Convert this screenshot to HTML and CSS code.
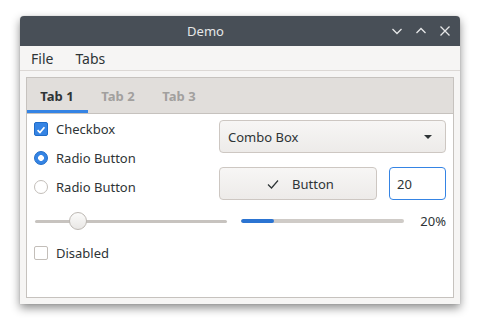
FILE: index.html
```html
<!DOCTYPE html>
<html lang="en">
<head>
  <meta charset="UTF-8" />
  <title>Demo</title>
  <link rel="stylesheet" href="styles.css">
</head>
<body>

  <div class="window">
    <header class="titlebar">
      <span class="title">Demo</span>
      <div class="controls">
        <svg width="12" height="12" viewBox="0 0 12 12"><path d="M1.5 4 L6 8.5 L10.5 4" /></svg>
        <svg width="12" height="12" viewBox="0 0 12 12"><path d="M1.5 8 L6 3.5 L10.5 8" /></svg>
        <svg width="12" height="12" viewBox="0 0 12 12"><path d="M1.5 1.5 L10.5 10.5 M10.5 1.5 L1.5 10.5" /></svg>
      </div>
    </header>

    <nav class="menubar">
      <span>File</span>
      <span>Tabs</span>
    </nav>

    <div class="client">
      <div class="tabs">
        <div class="tab-bar">
          <span class="tab active">Tab 1</span>
          <span class="tab">Tab 2</span>
          <span class="tab">Tab 3</span>
        </div>

        <div class="page">
          <div class="top">
            <div class="left">
              <label class="row"><span class="check on"><svg width="14" height="14" viewBox="0 0 14 14"><path d="M3 7.2 L5.8 10 L11 3.8" /></svg></span>Checkbox</label>
              <label class="row"><span class="radio on"></span>Radio Button</label>
              <label class="row"><span class="radio"></span>Radio Button</label>
            </div>
            <div class="right">
              <div class="combo">
                <span>Combo Box</span>
                <span class="arrow"></span>
              </div>
              <div class="buttons">
                <button class="btn">
                  <svg width="14" height="14" viewBox="0 0 14 14"><path d="M2 7.5 L5.5 11 L12 3.5" /></svg>
                  Button
                </button>
                <div class="spin">20</div>
              </div>
            </div>
          </div>

          <div class="sliders">
            <div class="slider">
              <div class="track"></div>
              <div class="handle"></div>
            </div>
            <div class="progress">
              <div class="fill" style="width: 20%"></div>
            </div>
            <span class="percent">20%</span>
          </div>

          <label class="row disabled"><span class="check"></span>Disabled</label>
        </div>
      </div>
    </div>
  </div>

</body>
</html>
```

FILE: styles.css
```css
body {
  margin: 0;
  padding: 16px 20px;
  background: #ffffff;
  font-family: 'Noto Sans', sans-serif;
  font-size: 13px;
  color: #2e3436;
}

.window {
  width: 440px;
  height: 288px;
  display: flex;
  flex-direction: column;
  background: #f6f5f4;
  border-radius: 4px 4px 0 0;
  box-shadow: 0 4px 10px rgba(0,0,0,0.45), 0 0 1px rgba(0,0,0,0.3);
  overflow: hidden;
}

.titlebar {
  height: 30px;
  background: #484f57;
  color: #e6e7e8;
  display: flex;
  align-items: center;
}

.title {
  flex: 1;
  text-align: center;
  font-size: 13px;
}

.controls {
  display: flex;
  gap: 12px;
  padding-right: 9px;
  padding-bottom: 1px;
}

.controls path {
  fill: none;
  stroke: #e6e7e8;
  stroke-width: 1.3;
}

.menubar {
  height: 24px;
  display: flex;
  align-items: center;
  gap: 22px;
  padding-left: 11px;
  font-size: 14px;
  border-bottom: 1px solid #dcd8d5;
}

.client {
  flex: 1;
  padding: 6px;
  display: flex;
}

.tabs {
  flex: 1;
  border: 1px solid #c6c2be;
  background: #ffffff;
  display: flex;
  flex-direction: column;
}

.tab-bar {
  height: 35px;
  background: #e1dedb;
  border-bottom: 1px solid #c6c2be;
  display: flex;
}

.tab {
  width: 61px;
  display: flex;
  align-items: center;
  justify-content: center;
  font-weight: bold;
  color: #a2a09e;
  padding-top: 1px;
  padding-right: 1px;
  box-sizing: border-box;
}

.tab.active {
  color: #2e3436;
  box-shadow: inset 0 -3px 0 #3584e4;
}

.page {
  flex: 1;
  padding: 0 7px;
  display: flex;
  flex-direction: column;
}

.top {
  display: flex;
  justify-content: space-between;
}

.left {
  display: flex;
  flex-direction: column;
}

.row {
  height: 29px;
  display: flex;
  align-items: center;
  gap: 8px;
}

.check {
  width: 14px;
  height: 14px;
  box-sizing: border-box;
  border: 1px solid #c3beb9;
  border-radius: 2px;
  background: #ffffff;
  display: flex;
}

.check.on {
  background: #3584e4;
  border-color: #1f6cc8;
}

.check path {
  fill: none;
  stroke: #ffffff;
  stroke-width: 2;
}

.radio {
  width: 14px;
  height: 14px;
  box-sizing: border-box;
  border: 1px solid #c3beb9;
  border-radius: 50%;
  background: #ffffff;
}

.radio.on {
  border-color: #1f6cc8;
  background: radial-gradient(circle, #ffffff 0 2.6px, #3584e4 3.2px);
}

.right {
  width: 227px;
  padding-top: 6px;
  display: flex;
  flex-direction: column;
  gap: 14px;
}

.combo {
  height: 33px;
  box-sizing: border-box;
  border: 1px solid #cdc7c2;
  border-radius: 4px;
  background: linear-gradient(#f7f6f5, #edebe9);
  display: flex;
  align-items: center;
  justify-content: space-between;
  padding: 0 13px 0 8px;
}

.arrow {
  width: 0;
  height: 0;
  border-left: 4px solid transparent;
  border-right: 4px solid transparent;
  border-top: 4px solid #2e3436;
}

.buttons {
  display: flex;
  justify-content: space-between;
}

.btn {
  width: 158px;
  height: 33px;
  border: 1px solid #cdc7c2;
  border-radius: 4px;
  background: linear-gradient(#f7f6f5, #edebe9);
  font-family: inherit;
  font-size: 13px;
  color: #2e3436;
  display: flex;
  align-items: center;
  justify-content: center;
  gap: 12px;
  padding: 0 0 0 4px;
}

.btn path {
  fill: none;
  stroke: #2e3436;
  stroke-width: 1.2;
}

.spin {
  width: 57px;
  height: 33px;
  box-sizing: border-box;
  border: 1px solid #3584e4;
  border-radius: 4px;
  background: #ffffff;
  display: flex;
  align-items: center;
  padding-left: 7px;
}

.sliders {
  height: 40px;
  display: flex;
  align-items: center;
  padding-left: 1px;
}

.slider {
  width: 192px;
  height: 20px;
  position: relative;
  display: flex;
  align-items: center;
}

.track {
  flex: 1;
  height: 3px;
  background: #c7c3bf;
  border-radius: 2px;
}

.handle {
  position: absolute;
  left: 34px;
  top: 1px;
  width: 18px;
  height: 18px;
  box-sizing: border-box;
  border: 1px solid #bdb8b3;
  border-radius: 50%;
  background: linear-gradient(#fbfbfa, #e9e7e5);
}

.progress {
  width: 163px;
  height: 4px;
  margin-left: 14px;
  background: #cfcbc7;
  border-radius: 2px;
  overflow: hidden;
}

.fill {
  height: 100%;
  background: #2b74d2;
  border-radius: 2px;
}

.percent {
  margin-left: auto;
}

.disabled {
  height: 23px;
}
```
